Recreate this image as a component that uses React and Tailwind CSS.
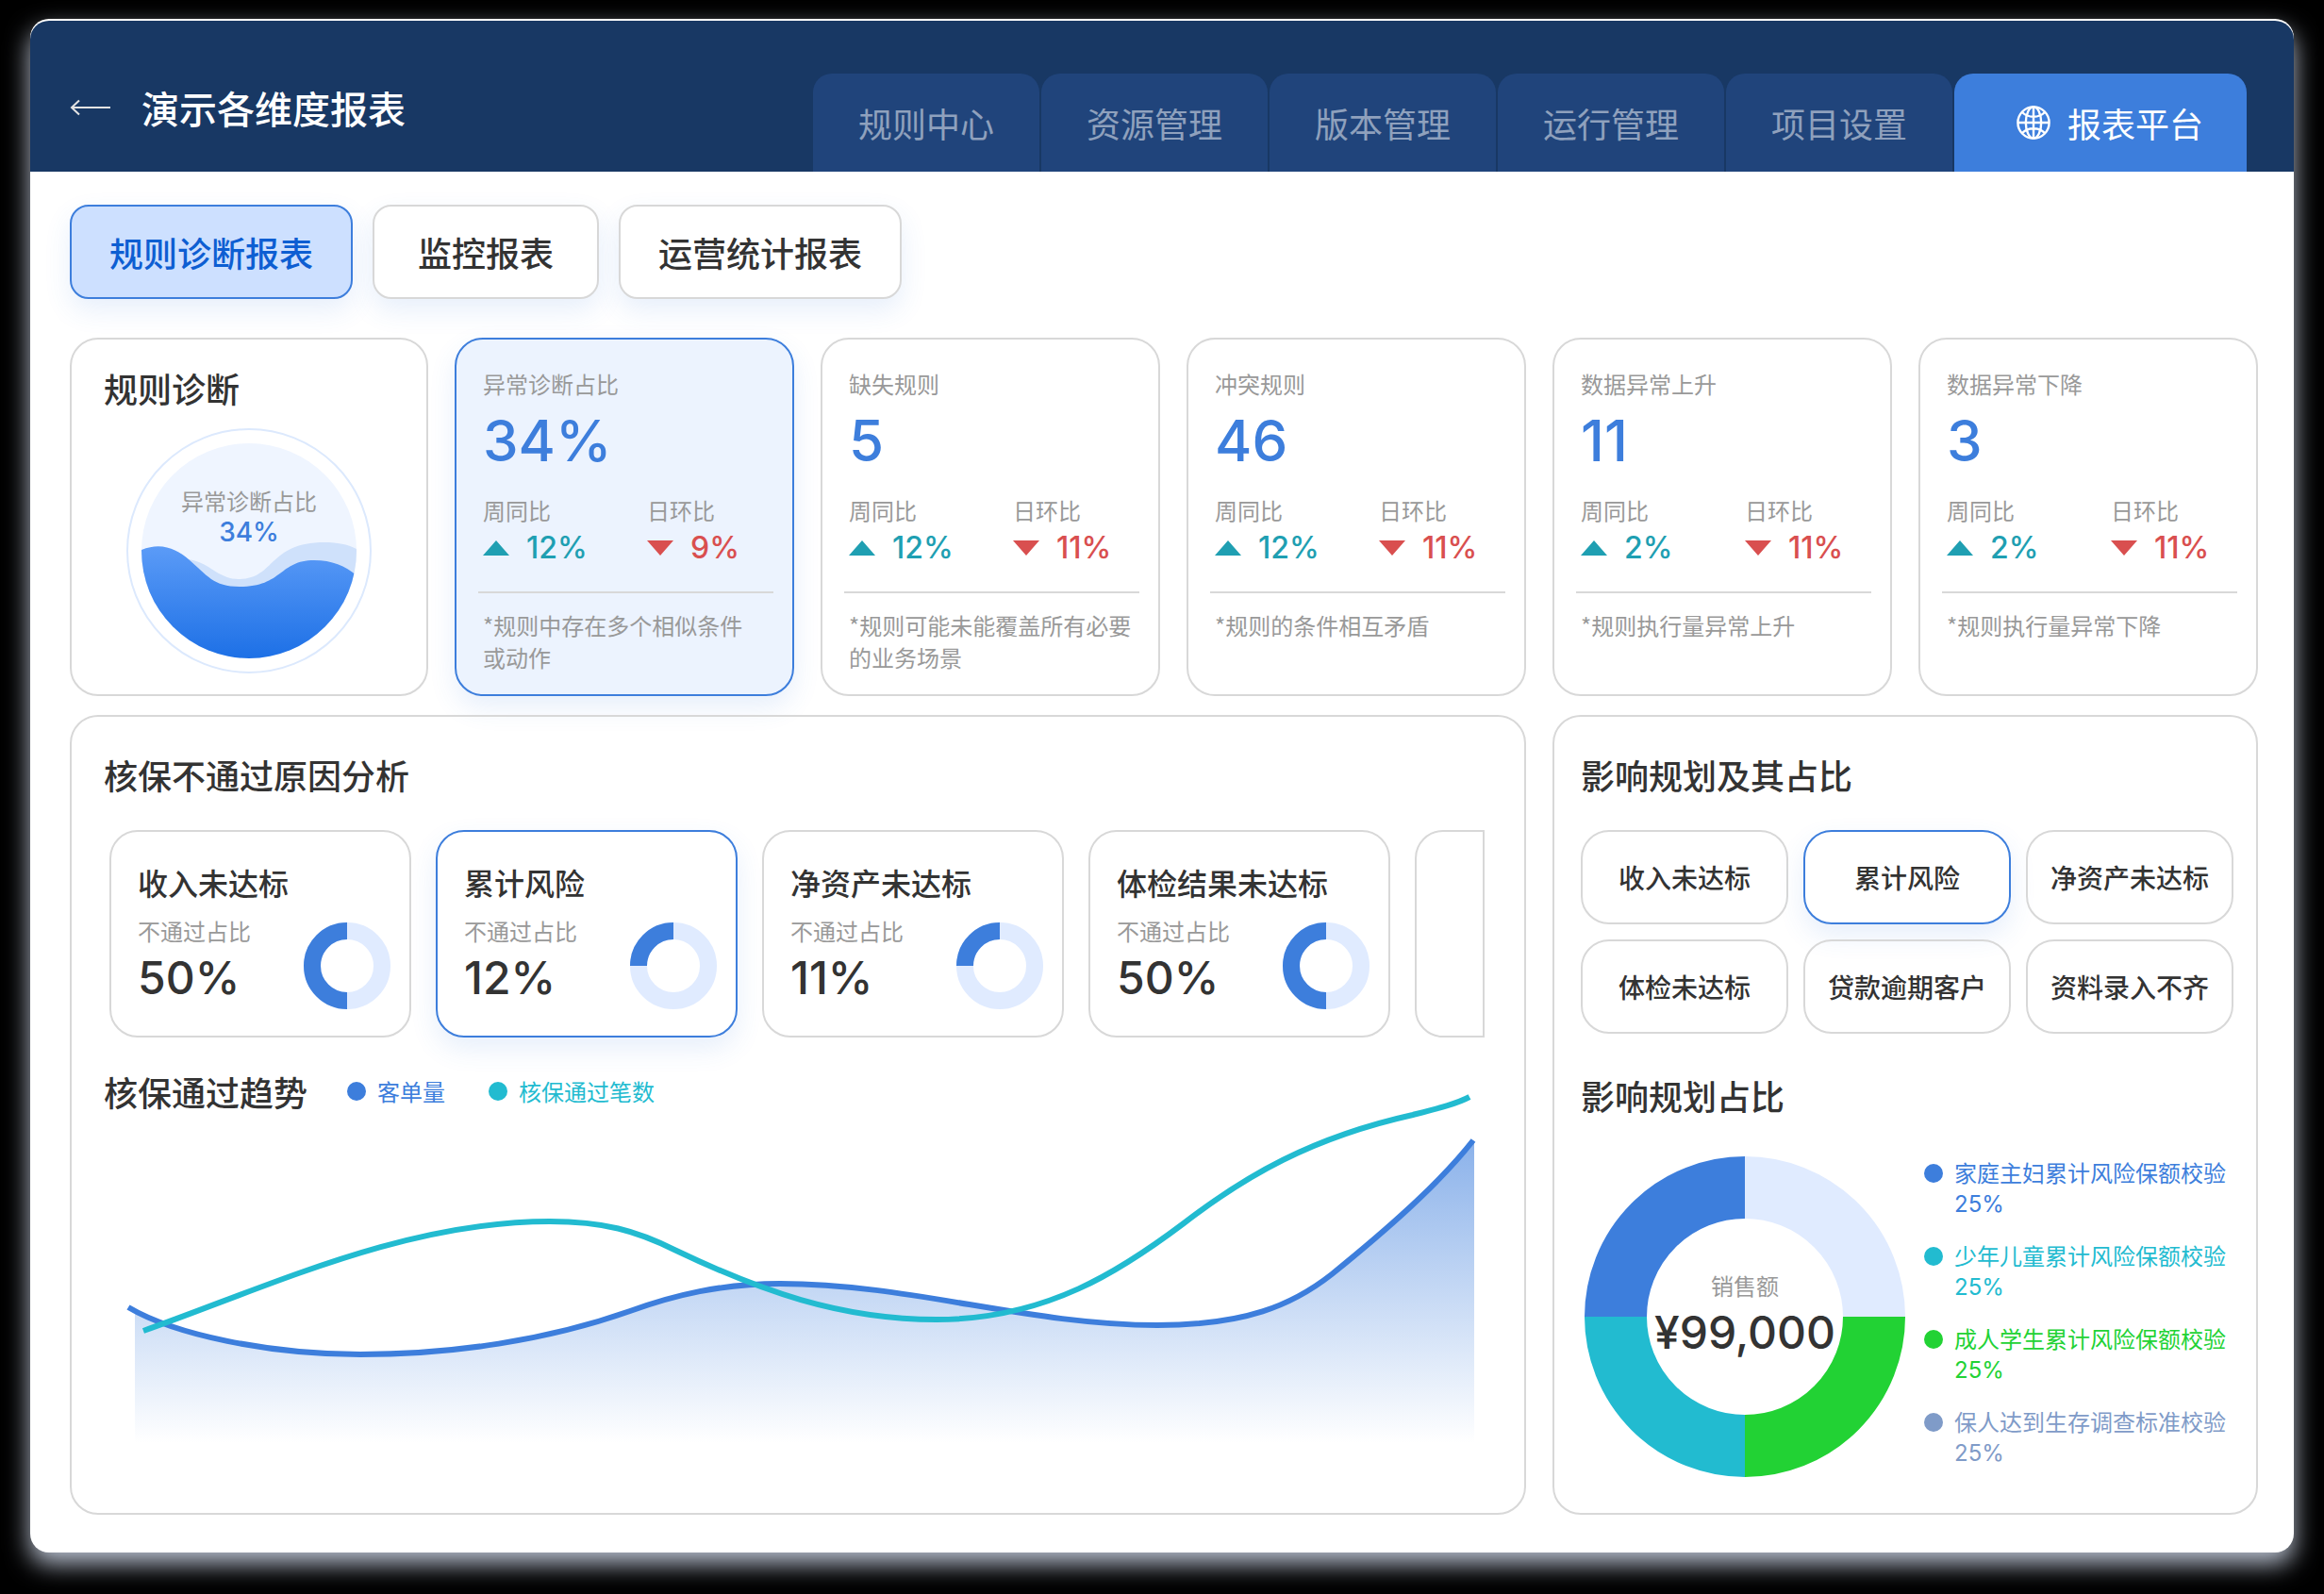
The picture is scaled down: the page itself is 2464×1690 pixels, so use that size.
import clsx from "clsx";
import React, { useState } from "react";

const NAV_TABS = ["规则中心", "资源管理", "版本管理", "运行管理", "项目设置"];

const REPORTS = [
  { name: "规则诊断报表", width: "w-[300px]" },
  { name: "监控报表", width: "w-[240px]" },
  { name: "运营统计报表", width: "w-[300px]" },
];

const METRICS = [
  { title: "异常诊断占比", value: "34%", week: "12%", day: "9%", note: "*规则中存在多个相似条件\n或动作" },
  { title: "缺失规则", value: "5", week: "12%", day: "11%", note: "*规则可能未能覆盖所有必要\n的业务场景" },
  { title: "冲突规则", value: "46", week: "12%", day: "11%", note: "*规则的条件相互矛盾" },
  { title: "数据异常上升", value: "11", week: "2%", day: "11%", note: "*规则执行量异常上升" },
  { title: "数据异常下降", value: "3", week: "2%", day: "11%", note: "*规则执行量异常下降" },
];

const REASONS = [
  { title: "收入未达标", value: "50%", share: 0.5 },
  { title: "累计风险", value: "12%", share: 0.25 },
  { title: "净资产未达标", value: "11%", share: 0.25 },
  { title: "体检结果未达标", value: "50%", share: 0.5 },
];

const FACTORS = ["收入未达标", "累计风险", "净资产未达标", "体检未达标", "贷款逾期客户", "资料录入不齐"];

const SHARES = [
  { name: "家庭主妇累计风险保额校验", text: "text-[#3d7edc]", dot: "bg-[#3d7edc]" },
  { name: "少年儿童累计风险保额校验", text: "text-[#22bbd0]", dot: "bg-[#22bbd0]" },
  { name: "成人学生累计风险保额校验", text: "text-[#22d234]", dot: "bg-[#22d234]" },
  { name: "保人达到生存调查标准校验", text: "text-[#7f9bc8]", dot: "bg-[#7f9bc8]" },
];

const SHADOW = "shadow-[0_12px_28px_rgba(61,126,220,0.12)]";
const NUMERIC = "font-['Inter',sans-serif]";

const BackIcon = () => (
  <svg viewBox="0 0 44 20" className="w-11 h-5" fill="none" stroke="#e3e3e3" strokeWidth="2">
    <path d="M43 10H2M10 2.5L2 10l8 7.5" />
  </svg>
);

const GlobeIcon = () => (
  <svg viewBox="0 0 36 36" className="w-9 h-9" fill="none" stroke="white" strokeWidth="2.4">
    <circle cx="18" cy="18" r="16.6" />
    <ellipse cx="18" cy="18" rx="8.2" ry="16.6" />
    <path d="M18 1.4v33.2M1.4 18h33.2M6 7c3.2 3.2 7.2 4.8 12 4.8s8.8-1.600 12-4.800M6 29c3.200-3.200 7.200-4.800 12-4.800s8.800 1.600 12 4.800" />
  </svg>
);

const Header = () => {
  const [tab, setTab] = useState("报表平台");

  return (
    <header className="flex justify-between h-[160px] pl-[42px] pr-[50px] rounded-t-[20px] bg-[#183864]">
      <div className="flex items-center gap-8 pt-6">
        <button aria-label="返回">
          <BackIcon />
        </button>
        <h1 className="text-[40px] leading-[56px] font-medium text-white">演示各维度报表</h1>
      </div>

      <nav className="flex self-end gap-[2px]">
        {NAV_TABS.map((name) => (
          <button
            key={name}
            onClick={() => setTab(name)}
            className="w-[240px] h-[104px] rounded-t-[20px] bg-[#20447b] text-[36px] leading-[42px] text-white/50"
          >
            {name}
          </button>
        ))}
        <button
          onClick={() => setTab("报表平台")}
          aria-pressed={tab === "报表平台"}
          className="flex items-center justify-center gap-[18px] w-[310px] h-[104px] pl-5 rounded-t-[20px] bg-[#3d7edc] text-[36px] leading-[42px] text-white"
        >
          <GlobeIcon />
          <span>报表平台</span>
        </button>
      </nav>
    </header>
  );
};

const ReportSwitch = () => {
  const [report, setReport] = useState(0);

  return (
    <div className="flex gap-[21px]">
      {REPORTS.map((item, index) => (
        <button
          key={item.name}
          onClick={() => setReport(index)}
          className={clsx(
            "h-[100px] rounded-[20px] border-2 text-[36px] leading-[42px] font-medium",
            SHADOW,
            item.width,
            report === index
              ? "border-[#3d7edc] bg-[#cde0ff] text-[#0d5ed2]"
              : "border-[#d8d8d8] bg-white text-[#333333]"
          )}
        >
          {item.name}
        </button>
      ))}
    </div>
  );
};

const LiquidGauge = () => (
  <div className="grid place-items-center w-[260px] h-[260px] mx-auto rounded-full border-2 border-[#dce9fd]">
    <div className="relative w-[228px] h-[228px]">
      <svg viewBox="0 0 228 228" className="w-full h-full">
        <defs>
          <linearGradient id="liquid" x1="0" y1="0" x2="0" y2="1">
            <stop offset="0" stopColor="#5b9bf7" />
            <stop offset="1" stopColor="#1d70e6" />
          </linearGradient>
          <clipPath id="gauge">
            <circle cx="114" cy="114" r="114" />
          </clipPath>
        </defs>
        <g clipPath="url(#gauge)">
          <rect width="228" height="228" fill="#eff5ff" />
          <path
            d="M0 150C20 124 40 119 58 125C74 130 84 144 103 144C142 144 134 105 194 105C208 105 218 107 228 112V180H0Z"
            fill="#cfe1fb"
          />
          <path
            d="M0 113C22 104 38 113 50 123C70 140 76 152 104 152C150 152 146 124 183 124C202 124 216 130 228 140V228H0Z"
            fill="url(#liquid)"
          />
        </g>
      </svg>
      <div className="absolute inset-x-0 top-11 text-center">
        <div className="text-[24px] leading-[34px] text-[#999999]">异常诊断占比</div>
        <div className={clsx("text-[28px] leading-[32px] font-medium text-[#3d7edc]", NUMERIC)}>34%</div>
      </div>
    </div>
  </div>
);

const Trend = ({ label, value, up }) => (
  <div className="w-[174px] shrink-0">
    <div className="text-[24px] leading-[34px] text-[#999999]">{label}</div>
    <div
      className={clsx(
        "flex items-center gap-[18px] mt-[7px] text-[32px] leading-[32px] font-medium",
        NUMERIC,
        up ? "text-[#1f9fb2]" : "text-[#d94f4f]"
      )}
    >
      <svg viewBox="0 0 28 16" className="w-7 h-4" fill="currentColor">
        <path d={up ? "M14 0L28 16H0Z" : "M0 0H28L14 16Z"} />
      </svg>
      <span>{value}</span>
    </div>
  </div>
);

const MetricCard = ({ metric, active, onClick }) => (
  <button
    onClick={onClick}
    className={clsx(
      "flex flex-col flex-1 min-w-0 pt-[30px] pb-[22px] pl-7 pr-5 rounded-[30px] border-2 text-left",
      active ? "border-[#3d7edc] bg-[#ecf3fe]" : "border-[#d8d8d8]",
      active && SHADOW
    )}
  >
    <div className="text-[24px] leading-[34px] text-[#999999]">{metric.title}</div>
    <div className={clsx("mt-[13px] text-[60px] leading-[60px] font-medium text-[#3d7edc]", NUMERIC)}>
      {metric.value}
    </div>
    <div className="flex mt-[27px]">
      <Trend label="周同比" value={metric.week} up />
      <Trend label="日环比" value={metric.day} />
    </div>
    <div className="self-stretch h-[2px] mt-[30px] -ml-[5px] bg-[#d8d8d8]" />
    <div className="mt-[17px] text-[24px] leading-[34px] text-[#999999] whitespace-pre">{metric.note}</div>
  </button>
);

// the filled part runs counter-clockwise from 12 o'clock
const MiniDonut = ({ share }) => (
  <svg viewBox="0 0 92 92" className="w-[92px] h-[92px] shrink-0" fill="none" strokeWidth="18">
    <circle cx="46" cy="46" r="37" stroke="#e0ebff" />
    <path d={share === 0.5 ? "M46 9A37 37 0 0 0 46 83" : "M46 9A37 37 0 0 0 9 46"} stroke="#3d7edc" />
  </svg>
);

const ReasonCards = () => {
  const [reason, setReason] = useState(1);

  return (
    <div className="grid grid-cols-[repeat(4,minmax(0,1fr))_74px] gap-[26px] mt-[38px] pl-[6px] pr-2">
      {REASONS.map((item, index) => (
        <button
          key={item.title}
          onClick={() => setReason(index)}
          className={clsx(
            "pt-[33px] pb-7 pl-7 pr-5 rounded-[30px] border-2 text-left",
            reason === index ? "border-[#3d7edc] bg-white" : "border-[#d8d8d8]",
            reason === index && SHADOW
          )}
        >
          <div className="text-[32px] leading-[40px] font-medium text-[#333333] whitespace-nowrap">{item.title}</div>
          <div className="flex items-end justify-between mt-[15px]">
            <div>
              <div className="text-[24px] leading-[34px] text-[#999999]">不通过占比</div>
              <div className={clsx("text-[48px] leading-[66px] font-medium text-[#333333]", NUMERIC)}>
                {item.value}
              </div>
            </div>
            <MiniDonut share={item.share} />
          </div>
        </button>
      ))}
      <div className="rounded-l-[30px] border-2 border-[#d8d8d8]" />
    </div>
  );
};

const TrendChart = () => (
  <svg viewBox="0 0 1472 400" className="w-full -mt-7" fill="none" strokeWidth="6">
    <defs>
      <linearGradient id="area" gradientUnits="userSpaceOnUse" x1="0" y1="59" x2="0" y2="380">
        <stop offset="0" stopColor="#3d7edc" stopOpacity="0.6" />
        <stop offset="1" stopColor="#3d7edc" stopOpacity="0" />
      </linearGradient>
    </defs>
    <path
      d="M33 241C85 267 175 286 272 286C370 286 470 271 558 240C605 223 655 211 717 211C855 211 980 255 1117 255C1210 255 1260 234 1302 201C1360 154 1415 106 1453 59V380H33Z"
      fill="url(#area)"
    />
    <path
      d="M26 236C75 265 175 286 272 286C370 286 470 271 558 240C605 223 655 211 717 211C855 211 980 255 1117 255C1210 255 1260 234 1302 201C1360 154 1415 106 1452 59"
      stroke="#3d7edc"
    />
    <path
      d="M42 261C180 212 320 145 473 145C530 145 565 155 605 175C695 218 780 249 883 249C1000 249 1080 196 1145 147C1210 97 1280 56 1388 32C1415 25 1435 20 1448 13"
      stroke="#22bbd0"
    />
  </svg>
);

const ShareDonut = () => (
  <div className="relative w-[340px] h-[340px] ml-1 shrink-0">
    <svg viewBox="0 0 340 340" className="w-full h-full" fill="none" strokeWidth="66">
      <path d="M170 33A137 137 0 0 1 307 170" stroke="#e0ebff" />
      <path d="M307 170A137 137 0 0 1 170 307" stroke="#22d234" />
      <path d="M170 307A137 137 0 0 1 33 170" stroke="#22bbd0" />
      <path d="M33 170A137 137 0 0 1 170 33" stroke="#3d7edc" />
    </svg>
    <div className="absolute inset-x-0 top-[120px] text-center">
      <div className="text-[24px] leading-[34px] text-[#999999]">销售额</div>
      <div className={clsx("text-[48px] leading-[66px] font-medium text-[#333333]", NUMERIC)}>¥99,000</div>
    </div>
  </div>
);

const FactorPanel = () => {
  const [factor, setFactor] = useState("累计风险");

  return (
    <section className="w-[748px] shrink-0 pt-10 pb-[38px] pl-7 pr-6 rounded-[30px] border-2 border-[#d8d8d8]">
      <h2 className="text-[36px] leading-[42px] font-medium">影响规划及其占比</h2>
      <div className="grid grid-cols-3 gap-4 mt-[38px]">
        {FACTORS.map((name) => (
          <button
            key={name}
            onClick={() => setFactor(name)}
            className={clsx(
              "h-[100px] rounded-[30px] border-2 text-[28px] leading-[34px] font-medium whitespace-nowrap",
              factor === name ? "border-[#3d7edc]" : "border-[#d8d8d8]",
              factor === name && SHADOW
            )}
          >
            {name}
          </button>
        ))}
      </div>

      <h2 className="mt-11 text-[36px] leading-[42px] font-medium">影响规划占比</h2>
      <div className="flex gap-5 mt-11">
        <ShareDonut />
        <ul className="flex flex-col gap-5">
          {SHARES.map((item) => (
            <li key={item.name} className={clsx("flex gap-3 text-[24px] leading-[34px]", item.text)}>
              <span className={clsx("w-5 h-5 mt-2 rounded-full shrink-0", item.dot)} />
              <div className="whitespace-nowrap">
                <div>{item.name}</div>
                <div className={NUMERIC}>25%</div>
              </div>
            </li>
          ))}
        </ul>
      </div>
    </section>
  );
};

const App = () => {
  const [metric, setMetric] = useState(0);

  return (
    <div className="min-h-screen px-8 pt-5 pb-11 bg-black overflow-hidden font-['Noto_Sans_CJK_SC',sans-serif] text-[#333333]">
      <div className="pt-[2px] rounded-[20px] bg-white shadow-[0_12px_26px_rgba(222,232,250,0.82)]">
        <Header />

        <main className="pt-[35px] pb-10 pl-[42px] pr-[38px]">
          <ReportSwitch />

          <div className="flex gap-7 mt-[41px]">
            <section className="w-[380px] shrink-0 pt-[30px] pb-[22px] rounded-[30px] border-2 border-[#d8d8d8]">
              <h2 className="mb-[22px] pl-[34px] text-[36px] leading-[42px] font-medium">规则诊断</h2>
              <LiquidGauge />
            </section>
            {METRICS.map((item, index) => (
              <MetricCard
                key={item.title}
                metric={item}
                active={metric === index}
                onClick={() => setMetric(index)}
              />
            ))}
          </div>

          <div className="flex gap-7 mt-5">
            <section className="flex-1 min-w-0 pt-10 px-[34px] rounded-[30px] border-2 border-[#d8d8d8]">
              <h2 className="text-[36px] leading-[42px] font-medium">核保不通过原因分析</h2>
              <ReasonCards />

              <div className="flex items-center mt-9">
                <h2 className="text-[36px] leading-[42px] font-medium">核保通过趋势</h2>
                <div className="flex items-center gap-3 ml-[42px] text-[24px] leading-[34px] text-[#3d7edc]">
                  <span className="w-5 h-5 rounded-full bg-[#3d7edc]" />
                  客单量
                </div>
                <div className="flex items-center gap-3 ml-[46px] text-[24px] leading-[34px] text-[#22bbd0]">
                  <span className="w-5 h-5 rounded-full bg-[#22bbd0]" />
                  核保通过笔数
                </div>
              </div>
              <TrendChart />
            </section>

            <FactorPanel />
          </div>
        </main>
      </div>
    </div>
  );
};

export default App;
